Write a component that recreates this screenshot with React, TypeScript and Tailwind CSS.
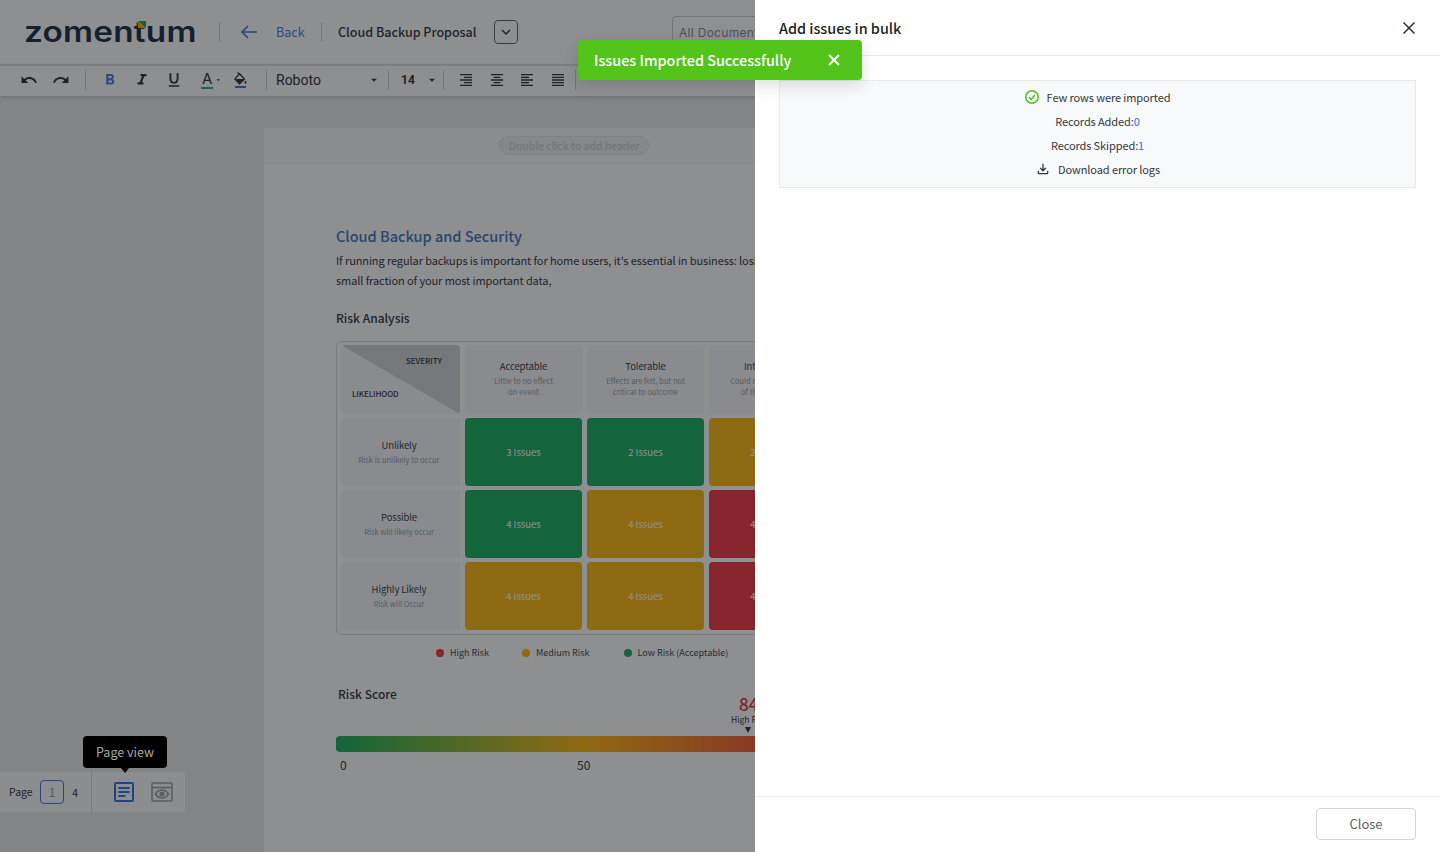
import React from "react";
import {
  MdUndo, MdRedo, MdFormatBold, MdFormatItalic, MdFormatUnderlined,
  MdFormatAlignRight, MdFormatAlignCenter, MdFormatAlignLeft, MdFormatAlignJustify,
  MdKeyboardArrowDown, MdArrowDropDown, MdOutlineFileDownload,
} from "react-icons/md";

const font = { fontFamily: '"Noto Sans CJK SC", "Noto Sans", sans-serif' };

function Sep({ h = "h-5" }: { h?: string }) {
  return <div className={`w-px ${h} bg-[#c9cacc] shrink-0`} />;
}

function HeadCell({ title, a, b }: { title: string; a: string; b: string }) {
  return (
    <div className="bg-[#f7f7f8] rounded flex flex-col items-center text-center pt-[14px]">
      <div className="text-[9.5px] leading-[15px] tracking-[-0.1px] text-[#2a303a] whitespace-nowrap">{title}</div>
      <div className="text-[7.5px] leading-[11px] text-[#8e939b] whitespace-nowrap mt-[1px]">{a}</div>
      <div className="text-[7.5px] leading-[11px] text-[#8e939b] whitespace-nowrap">{b}</div>
    </div>
  );
}

function RowCell({ title, sub }: { title: string; sub: string }) {
  return (
    <div className="bg-[#f7f7f8] rounded flex flex-col items-center justify-center text-center pr-[3px]">
      <div className="text-[9.5px] leading-[15px] tracking-[-0.1px] text-[#2a303a] whitespace-nowrap">{title}</div>
      <div className="text-[7.5px] leading-[14px] text-[#8e939b] whitespace-nowrap">{sub}</div>
    </div>
  );
}

function Risk({ c, t }: { c: string; t: string }) {
  return (
    <div className={`${c} rounded flex items-center justify-center text-[9.5px] text-white whitespace-nowrap overflow-hidden`}>
      {t}
    </div>
  );
}

function Legend({ c, t }: { c: string; t: string }) {
  return (
    <div className="flex items-center gap-[6px] text-[9px] text-[#30363f] whitespace-nowrap">
      <span className={`w-2 h-2 rounded-full ${c}`} />
      {t}
    </div>
  );
}

const G = "bg-[#0bab52]";
const A = "bg-[#ffb400]";
const R = "bg-[#ee2a36]";

export default function App() {
  return (
    <div className="relative w-[1440px] h-[852px] overflow-hidden bg-[#e7e8e9]" style={font}>
      {/* Underlying editor */}
      <header className="h-[64px] bg-white flex items-center pl-6">
        <div className="relative w-[172px] h-8 flex items-center">
          <span className="inline-block origin-left scale-x-[1.19] text-[28px] leading-8 font-semibold text-[#0d2038] tracking-[0.2px] whitespace-nowrap" style={{ fontFamily: "Inter, sans-serif" }}>
            zomentum
          </span>
          <svg className="absolute left-[114px] top-[5px]" width="8" height="7" viewBox="0 0 8 7">
            <path d="M0 0H8V7Z" fill="#12a05c" />
            <path d="M0 0L8 7H0Z" fill="#f5b000" />
          </svg>
        </div>
        <div className="w-px h-5 bg-[#c9cacc] ml-[23px]" />
        <svg className="ml-[20px]" width="18" height="16" viewBox="0 0 18 16" fill="none" stroke="#2f6ce0" strokeWidth="1.6">
          <path d="M17 8H2M8 2 2 8l6 6" />
        </svg>
        <span className="ml-[18px] w-[28px] text-[12.5px] text-[#3b72e0]">Back</span>
        <div className="w-px h-5 bg-[#c9cacc] ml-[17px]" />
        <span className="ml-4 w-[139px] text-[12.5px] font-medium text-[#1f2630] whitespace-nowrap">Cloud Backup Proposal</span>
        <div className="ml-[17px] w-[24px] h-[24px] border border-[#555a62] rounded flex items-center justify-center text-[#1f2630]">
          <MdKeyboardArrowDown size={18} />
        </div>
        <div className="ml-[154px] h-[33px] w-[140px] mt-[1px] border border-[#c6c8cc] rounded px-[6px] flex items-center text-[12px] text-[#7a7f87] whitespace-nowrap tracking-[0.3px]" style={{ fontFamily: "Inter, sans-serif" }}>
          All Documents
        </div>
      </header>
      <div className="h-[32px] bg-white border-t-2 border-[#d8d9db] shadow-[0_2px_4px_rgba(0,0,0,0.15)] flex items-center pl-5 pb-[2px] relative text-[#222]">
        <MdUndo size={18} />
        <MdRedo size={18} className="ml-[14px]" />
        <div className="ml-[15px]"><Sep /></div>
        <MdFormatBold size={18} className="ml-[15px] text-[#3b72e0]" />
        <MdFormatItalic size={18} className="ml-[14px]" />
        <MdFormatUnderlined size={18} className="ml-[14px]" />
        <div className="ml-[18px] relative w-[22px] flex items-center">
          <span className="text-[15px] leading-4 border-b-2 border-[#19b070] px-[1px]" style={{ fontFamily: "Inter, sans-serif" }}>A</span>
          <MdArrowDropDown size={14} className="ml-[1px]" />
        </div>
        <svg className="ml-[11px]" width="13" height="18" viewBox="0 0 13 18" fill="none">
          <path d="M3.500 1.500l1.800 1.800" stroke="#222" strokeWidth="1.200" />
          <path d="M5.500 2.800L10.500 8 5.500 12.800 0.800 8Z" stroke="#222" strokeWidth="1.300" />
          <path d="M0.800 8H10.500L5.500 12.800Z" fill="#222" />
          <path d="M11.500 9.500c-.8 1-1.100 1.600-1.100 2.100a1.100 1.100 0 0 0 2.200 0c0-.5-.3-1.100-1.100-2.100Z" fill="#222" />
          <rect x="1" y="15" width="11" height="2" fill="#3f6cb8" />
        </svg>
        <div className="ml-[19px]"><Sep /></div>
        <span className="ml-[9px] w-[91px] text-sm text-[#222]" style={{ fontFamily: "Roboto, sans-serif" }}>Roboto</span>
        <MdArrowDropDown size={14} className="mr-[7px]" />
        <Sep />
        <span className="ml-[12px] w-[24px] text-[12px] font-bold" style={{ fontFamily: "Roboto, sans-serif" }}>14</span>
        <MdArrowDropDown size={14} className="mr-[4px]" />
        <Sep />
        <MdFormatAlignRight size={16} className="ml-[14px]" />
        <MdFormatAlignCenter size={16} className="ml-[15px]" />
        <MdFormatAlignLeft size={16} className="ml-[14px]" />
        <MdFormatAlignJustify size={16} className="ml-[15px]" />
        <div className="ml-[9px]"><Sep /></div>
      </div>

      {/* Page */}
      <div className="ml-[264px] mt-[32px] w-[700px] h-[724px] bg-white">
        <div className="h-[36px] border-b border-[#eceded] bg-[#fafafa] flex items-center justify-center pr-[80px]">
          <div className="w-[150px] h-[19px] rounded-full bg-[#eeeeef] border border-[#dfe0e1] text-[10.5px] leading-[17px] text-center text-[#c4c5c7] whitespace-nowrap">
            Double click to add header
          </div>
        </div>
        <div className="pl-[72px] pt-[61px]">
          <div className="text-[14.5px] leading-[22px] font-medium text-[#2f6cb8] whitespace-nowrap">Cloud Backup and Security</div>
          <div className="mt-[3px] text-[11px] leading-[20px] tracking-[-0.1px] text-[#1f2630] whitespace-nowrap">
            If running regular backups is important for home users, it's essential in business: losing even a
            <br />
            small fraction of your most important data,
          </div>
          <div className="mt-[18px] text-[12px] leading-[20px] font-medium text-[#1f2630]">Risk Analysis</div>
          <div className="mt-[13px] w-[640px] h-[294px] border border-[#d3d4d6] rounded-md pt-[3px] pl-1 grid grid-cols-[119px_117px_117px_117px] grid-rows-[69px_68px_68px_68px] gap-x-[5px] gap-y-[4px] overflow-hidden">
            <div className="relative bg-[#f7f7f8] rounded overflow-hidden">
              <svg className="absolute inset-0" width="119" height="69" viewBox="0 0 119 69">
                <path d="M0 0H119V69Z" fill="#cfd0d2" />
              </svg>
              <span className="absolute right-[18px] top-[10px] text-[8px] font-medium text-[#1f2630]">SEVERITY</span>
              <span className="absolute left-[11px] top-[43px] text-[8px] font-medium tracking-[-0.1px] text-[#1f2630]">LIKELIHOOD</span>
            </div>
            <HeadCell title="Acceptable" a="Little to no effect" b="on event" />
            <HeadCell title="Tolerable" a="Effects are felt, but not" b="critical to outcome" />
            <HeadCell title="Intolerable" a="Could result in failure" b="of the outcome" />
            <RowCell title="Unlikely" sub="Risk is unlikely to occur" />
            <Risk c={G} t="3 Issues" />
            <Risk c={G} t="2 Issues" />
            <Risk c={A} t="2 Issues" />
            <RowCell title="Possible" sub="Risk will likely occur" />
            <Risk c={G} t="4 Issues" />
            <Risk c={A} t="4 Issues" />
            <Risk c={R} t="4 Issues" />
            <RowCell title="Highly Likely" sub="Risk will Occur" />
            <Risk c={A} t="4 Issues" />
            <Risk c={A} t="4 Issues" />
            <Risk c={R} t="4 Issues" />
          </div>
          <div className="mt-[11px] flex pl-[100px]">
            <Legend c={R} t="High Risk" />
            <div className="ml-[33px]"><Legend c={A} t="Medium Risk" /></div>
            <div className="ml-[34px]"><Legend c={G} t="Low Risk (Acceptable)" /></div>
          </div>
          <div className="mt-[24px] pl-[2px] text-[12px] leading-[20px] font-medium text-[#1f2630]">Risk Score</div>
          <div className="relative h-[35px] w-[494px]">
            <div className="absolute left-[403px] -top-[10px] text-[17px] leading-5 font-medium text-[#d62a35]">84</div>
            <div className="absolute left-[395px] top-[9px] text-[8.5px] leading-3 text-[#1f2630] whitespace-nowrap">High Risk</div>
            <div className="absolute left-[409px] top-[23px] w-0 h-0 border-x-[3px] border-x-transparent border-t-[6px] border-t-[#1f2630]" />
          </div>
          <div className="h-4 w-[494px] -mt-[3px] rounded bg-[linear-gradient(90deg,#0bab52_0%,#ffb400_50%,#ee2a36_100%)]" />
          <div className="relative h-6 w-[494px] text-xs text-[#1f2630]">
            <span className="absolute left-[4px] top-[5px]">0</span>
            <span className="absolute left-[241px] top-[5px]">50</span>
          </div>
        </div>
      </div>

      {/* Bottom page bar */}
      <div className="absolute left-0 top-[772px] w-[185px] h-[40px] bg-[#fafafa] flex items-center text-[#1f2630]">
        <span className="ml-[9px] w-[24px] text-[10.5px]">Page</span>
        <div className="ml-[7px] w-[24px] h-[24px] rounded border border-[#2f6ce0] flex items-center justify-center text-[12px] text-[#8d9096]">1</div>
        <span className="ml-[8px] w-[6px] text-[11px]">4</span>
        <div className="ml-[13px] w-px h-10 bg-[#d0d1d3]" />
        <svg className="ml-[22px]" width="20" height="20" viewBox="0 0 20 20" fill="none" stroke="#2668e8" strokeWidth="2">
          <rect x="1" y="1" width="18" height="18" rx="1" />
          <path d="M4.5 6h11M4.5 10h11M4.5 14h7" />
        </svg>
        <svg className="ml-[17px]" width="22" height="20" viewBox="0 0 22 20" fill="none" stroke="#9a9b9d" strokeWidth="1.6">
          <rect x="1" y="1" width="20" height="18" rx="1" />
          <path d="M1 5.5h20" />
          <path d="M4.5 12c2-3 4.200-4 6.500-4s4.500 1 6.500 4c-2 3-4.200 4-6.500 4s-4.500-1-6.500-4Z" />
          <circle cx="11" cy="12" r="1.800" fill="#9a9b9d" />
        </svg>
      </div>

      {/* Dim overlay */}
      <div className="absolute inset-0 bg-[rgba(30,32,35,0.5)]" />

      {/* Tooltip */}
      <div className="absolute left-[83px] top-[736px] w-[84px] h-[32px] rounded bg-black text-[#a8a8a8] text-[12.5px] flex items-center justify-center">
        Page view
        <div className="absolute left-[38px] top-[32px] w-0 h-0 border-x-[4px] border-x-transparent border-t-[5px] border-t-black" />
      </div>

      {/* Drawer */}
      <aside className="absolute right-0 top-0 w-[685px] h-[852px] bg-white flex flex-col">
        <div className="h-[56px] border-b border-[#e8e9eb] flex items-center justify-between pl-6 pr-[22px] pt-[1px]">
          <span className="text-[14.4px] font-medium text-[#1b1f26]">Add issues in bulk</span>
          <svg width="18" height="18" viewBox="0 0 18 18" fill="none" stroke="#2a2e35" strokeWidth="1.5">
            <path d="M3.500 3.500l11 11M14.500 3.500l-11 11" />
          </svg>
        </div>
        <div className="flex-1 px-6 pt-6">
          <div className="h-[108px] border border-[#e8e9eb] bg-[#f8f9fa] flex flex-col items-center justify-center pb-[2px] text-[11px] leading-[24px] tracking-[-0.1px] text-[#333841]">
            <div className="flex items-center gap-[8px]">
              <svg width="14" height="14" viewBox="0 0 14 14" fill="none" stroke="#4fc41c" strokeWidth="1.500">
                <circle cx="7" cy="7" r="6.200" />
                <path d="M4 7.200l2.200 2.100L10 5" />
              </svg>
              <span>Few rows were imported</span>
            </div>
            <div>Records Added:<span className="text-[#2f6ce0]">0</span></div>
            <div>Records Skipped:<span className="text-[#2f6ce0]">1</span></div>
            <div className="flex items-center gap-[7px]">
              <MdOutlineFileDownload size={16} />
              <span>Download error logs</span>
            </div>
          </div>
        </div>
        <div className="h-[56px] border-t border-[#e8e9eb] flex items-start justify-end pr-6 pt-[11px]">
          <div className="w-[100px] h-[32px] border border-[#d3d5d9] rounded flex items-center justify-center text-[13px] text-[#5c616a]">Close</div>
        </div>
      </aside>

      {/* Toast */}
      <div className="absolute left-[578px] top-[40px] w-[284px] h-[40px] rounded bg-[#52c41a] shadow-[0_6px_16px_rgba(0,0,0,0.12)] flex items-center justify-between pl-4 pr-[22px] text-white">
        <span className="text-[14.4px] font-medium whitespace-nowrap">Issues Imported Successfully</span>
        <svg width="12" height="12" viewBox="0 0 12 12" fill="none" stroke="white" strokeWidth="2">
          <path d="M1 1l10 10M11 1L1 11" />
        </svg>
      </div>
    </div>
  );
}
